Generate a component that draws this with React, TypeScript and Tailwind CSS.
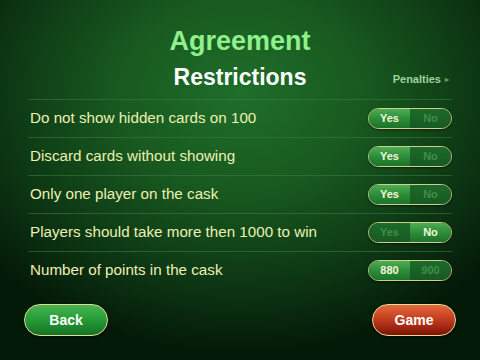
import React from "react";

type Row = { label: string; left: string; right: string; active: "left" | "right" };

const rows: Row[] = [
  { label: "Do not show hidden cards on 100", left: "Yes", right: "No", active: "left" },
  { label: "Discard cards without showing", left: "Yes", right: "No", active: "left" },
  { label: "Only one player on the cask", left: "Yes", right: "No", active: "left" },
  { label: "Players should take more then 1000 to win", left: "Yes", right: "No", active: "right" },
  { label: "Number of points in the cask", left: "880", right: "900", active: "left" },
];

function Toggle({ row }: { row: Row }) {
  const on = "bg-[linear-gradient(#4dae55,#2a8a36_55%,#1c7428)] text-[#f4f6d8]";
  const off = "bg-[linear-gradient(#1d6a2a,#175a22)] text-[#3f8e48]";
  return (
    <div className="flex w-[84px] h-[21px] rounded-full border border-[#cfd08e] overflow-hidden text-[11px] font-bold shadow-[0_1px_2px_rgba(0,0,0,0.5)]">
      <div className={`flex-1 flex items-center justify-center ${row.active === "left" ? on : off}`}>
        {row.left}
      </div>
      <div className={`flex-1 flex items-center justify-center ${row.active === "right" ? on : off}`}>
        {row.right}
      </div>
    </div>
  );
}

export default function App() {
  return (
    <div
      className="w-[480px] h-[360px] flex flex-col overflow-hidden bg-[radial-gradient(ellipse_68%_72%_at_50%_26%,#1f6e2a_0%,#18591f_38%,#0d3814_72%,#041a08_100%)]"
      style={{ fontFamily: '"Liberation Sans", Arial, sans-serif' }}
    >
      <div className="pt-[25px] text-center text-[27px] leading-[32px] font-bold text-[#8ff08c]">
        Agreement
      </div>
      <div className="mt-[6px] mx-[28px] grid grid-cols-[1fr_auto_1fr] items-center">
        <div />
        <div className="text-[23px] leading-[28px] font-bold text-white">Restrictions</div>
        <div className="flex justify-end items-center gap-[4px] pt-[5px] pr-[3px] text-[11px] font-bold text-[#9fd49c]">
          Penalties
          <span className="text-[8px] text-[#5f9a5f]">▸</span>
        </div>
      </div>
      <div className="mt-[8px] mx-[28px]">
        {rows.map((row) => (
          <div
            key={row.label}
            className="h-[38px] flex items-center justify-between border-t border-[#3a7a40]/60 pl-[2px]"
          >
            <span className="text-[15.2px] text-[#edf0b2]">{row.label}</span>
            <Toggle row={row} />
          </div>
        ))}
      </div>
      <div className="mt-[15px] px-[24px] flex justify-between">
        <button className="w-[84px] h-[32px] rounded-full border-[1.5px] border-[#e2dc95] bg-[linear-gradient(#47b552,#259a35_50%,#157227)] text-white text-[14px] font-bold shadow-[0_1px_3px_rgba(0,0,0,0.6)]">
          Back
        </button>
        <button className="w-[84px] h-[32px] rounded-full border-[1.5px] border-[#e2dc95] bg-[linear-gradient(#e3693f,#c03a1c_50%,#7e1206)] text-white text-[14px] font-bold shadow-[0_1px_3px_rgba(0,0,0,0.6)]">
          Game
        </button>
      </div>
    </div>
  );
}
